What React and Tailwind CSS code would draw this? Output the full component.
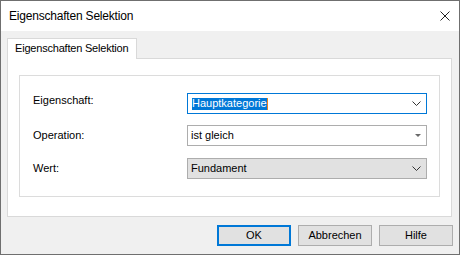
import React from "react";

function Chevron() {
  return (
    <svg width="9" height="5" viewBox="0 0 9 5" className="block">
      <path d="M0.5 0.5 L4.5 4.5 L8.5 0.5" fill="none" stroke="#333" strokeWidth="1" />
    </svg>
  );
}

function Tri() {
  return (
    <svg width="6" height="3" viewBox="0 0 6 3" className="block">
      <path d="M0 0 H6 L3 3 Z" fill="#6a6a6a" />
    </svg>
  );
}

export default function App() {
  return (
    <div className="w-[460px] h-[255px] bg-white text-black font-['Liberation_Sans',Arial,sans-serif]">
      <div className="w-full h-full border border-[#6f6f6f] flex flex-col">
        <div className="h-[30px] bg-white flex items-center justify-between pl-[8px] pr-[9px] shrink-0">
          <span className="text-[12px] leading-none tracking-[-0.2px] pb-px">Eigenschaften Selektion</span>
          <svg width="10" height="10" viewBox="0 0 10 10" className="block">
            <path d="M0.5 0.5 L9.5 9.5 M9.5 0.5 L0.5 9.5" stroke="#222" strokeWidth="1" fill="none" />
          </svg>
        </div>
        <div className="flex-1 bg-[#f0f0f0] pt-[7px] px-[6px] flex flex-col">
          <div className="flex">
            <div className="relative z-10 w-[130px] h-[21px] bg-white border border-b-0 border-[#d9d9d9] flex items-center pl-[7px] pb-[2px] text-[11px] leading-none tracking-[-0.2px] whitespace-nowrap">
              Eigenschaften Selektion
            </div>
          </div>
          <div className="-mt-px w-[445px] h-[159px] bg-white border border-[#d9d9d9] pt-[16px] pl-[11px]">
            <div className="w-[421px] h-[122px] border border-[#dcdcdc] pt-[17px] pl-[13px] flex flex-col text-[11px] leading-none whitespace-nowrap">
              <div className="flex items-center h-[21px]">
                <div className="w-[154px] pb-[7px]">Eigenschaft:</div>
                <div className="w-[240px] h-[21px] border border-[#0078d7] bg-white flex items-center pl-[4px] pr-[5px]">
                  <span className="bg-[#0078d7] text-white h-[12px] flex items-center">Hauptkategorie</span>
                  <span className="w-px h-[12px] bg-[#e8811f]" />
                  <span className="flex-1" />
                  <Chevron />
                </div>
              </div>
              <div className="flex items-center h-[21px] mt-[11px]">
                <div className="w-[154px]">Operation:</div>
                <div className="w-[240px] h-[21px] border border-[#adadad] bg-white flex items-center pl-[3px] pr-[5px]">
                  <span>ist gleich</span>
                  <span className="flex-1" />
                  <Tri />
                </div>
              </div>
              <div className="flex items-center h-[21px] mt-[12px]">
                <div className="w-[154px]">Wert:</div>
                <div className="w-[240px] h-[21px] border border-[#adadad] bg-[#e1e1e1] flex items-center pl-[3px] pr-[5px]">
                  <span>Fundament</span>
                  <span className="flex-1" />
                  <Chevron />
                </div>
              </div>
            </div>
          </div>
          <div className="flex justify-end gap-[7px] mt-[8px] text-[11px] leading-none">
            <div className="w-[74px] h-[21px] bg-[#e1e1e1] border-2 border-[#0078d7] flex items-center justify-center">OK</div>
            <div className="w-[74px] h-[21px] bg-[#e1e1e1] border border-[#adadad] flex items-center justify-center">Abbrechen</div>
            <div className="w-[74px] h-[21px] bg-[#e1e1e1] border border-[#adadad] flex items-center justify-center">Hilfe</div>
          </div>
        </div>
      </div>
    </div>
  );
}
